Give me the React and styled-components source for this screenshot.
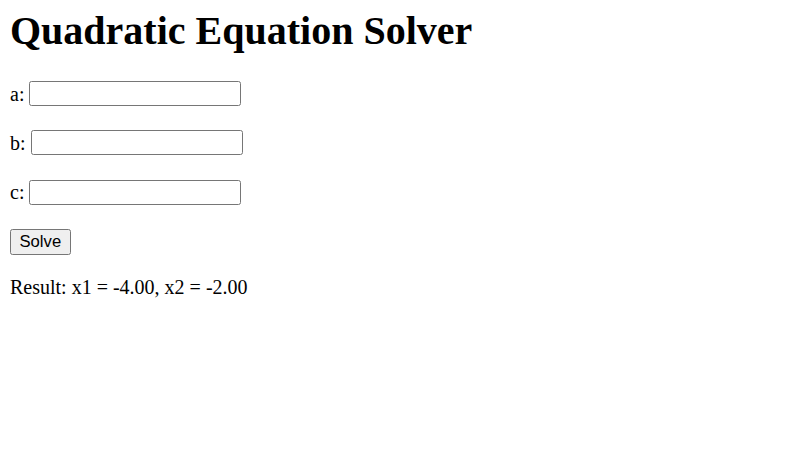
import React, { useState } from "react";
import styled, { createGlobalStyle } from "styled-components";

const GlobalStyle = createGlobalStyle`
  body {
    margin: 0;
    background: #fff;
    color: #000;
    font-family: "Liberation Serif", "Times New Roman", serif;
  }
`;

function solve(a, b, c) {
  const A = parseFloat(a);
  const B = parseFloat(b);
  const C = parseFloat(c);
  if (isNaN(A) || isNaN(B) || isNaN(C) || A === 0) return null;
  const d = B * B - 4 * A * C;
  if (d < 0) return "No real roots";
  const x1 = (-B - Math.sqrt(d)) / (2 * A);
  const x2 = (-B + Math.sqrt(d)) / (2 * A);
  return `x1 = ${x1.toFixed(2)}, x2 = ${x2.toFixed(2)}`;
}

function App() {
  const [values, setValues] = useState({ a: "", b: "", c: "" });
  const [result, setResult] = useState("x1 = -4.00, x2 = -2.00");

  const onChange = (key) => (e) =>
    setValues({ ...values, [key]: e.target.value });

  const onSolve = () => {
    const r = solve(values.a, values.b, values.c);
    if (r) setResult(r);
  };

  return (
    <Container>
      <GlobalStyle />
      <Title>Quadratic Equation Solver</Title>
      <Form>
        {["a", "b", "c"].map((key) => (
          <Row key={key}>
            <Label>{key}:</Label>
            <Input value={values[key]} onChange={onChange(key)} />
          </Row>
        ))}
        <Button type="button" onClick={onSolve}>
          Solve
        </Button>
      </Form>
      <Result>Result: {result}</Result>
    </Container>
  );
}

const Container = styled.main`
  padding: 11px 10px 10px;
  font-size: 20px;
`;

const Title = styled.h1`
  margin: 0;
  font-size: 40px;
  line-height: 40px;
  font-weight: 700;
`;

const Form = styled.div`
  display: flex;
  flex-direction: column;
  align-items: flex-start;
  gap: 24.4px;
  margin-top: 30px;
`;

const Row = styled.div`
  display: flex;
  align-items: center;
  gap: 5px;
  height: 25px;
`;

const Label = styled.span`
  line-height: 23px;
  padding-top: 1px;
`;

const Input = styled.input`
  box-sizing: border-box;
  width: 212px;
  height: 25px;
  padding: 1px 2.5px;
  border: 1px solid #767676;
  border-radius: 2.5px;
  background: #fff;
  font-family: "Liberation Sans", Arial, sans-serif;
  font-size: 16.67px;
`;

const Button = styled.button`
  box-sizing: border-box;
  height: 26px;
  padding: 0 8.5px;
  border: 1px solid #767676;
  border-radius: 2.5px;
  background: #efefef;
  color: #000;
  font-family: "Liberation Sans", Arial, sans-serif;
  font-size: 16.67px;
`;

const Result = styled.p`
  margin: 20.4px 0 0;
  line-height: 23px;
`;

export default App;
